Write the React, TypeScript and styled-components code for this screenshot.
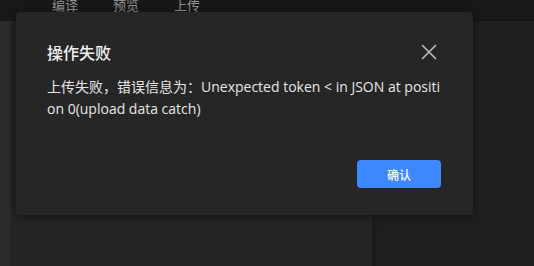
import React from "react";
import styled, { createGlobalStyle } from "styled-components";

const Global = createGlobalStyle`
  html, body { margin: 0; padding: 0; background: #1f1f1f; }
  body { font-family: "Open Sans", "Noto Sans CJK SC", sans-serif; }
  * { box-sizing: border-box; }
`;

const Page = styled.div`
  position: relative;
  width: 534px;
  height: 266px;
  overflow: hidden;
  display: flex;
  flex-direction: column;
  background: #1f1f1f;
`;

const TopBar = styled.div`
  height: 21px;
  background: #181818;
  display: flex;
  align-items: flex-start;
  padding-left: 52px;
  gap: 35px;
  border-bottom: 1px solid #151515;
`;

const Tab = styled.span`
  font-family: "Noto Sans CJK SC", sans-serif;
  font-size: 13px;
  line-height: 14px;
  margin-top: -2px;
  color: #8f8f8f;
`;

const Main = styled.div`
  flex: 1;
  display: flex;
`;

const SideStrip = styled.div`
  width: 10px;
  background: #2b2b2b;
`;

const Editor = styled.div`
  width: 367px;
  background: #252525;
  border-right: 5px solid #1c1c1c;
`;

const Preview = styled.div`
  flex: 1;
  background: #1f1f1f;
`;

const Modal = styled.div`
  position: absolute;
  left: 16px;
  top: 12px;
  width: 457px;
  height: 203px;
  background: #262626;
  border-radius: 4px;
  box-shadow: 0 2px 8px rgba(0, 0, 0, 0.45);
  padding: 28px 32px 27px 31px;
  display: flex;
  flex-direction: column;
`;

const Header = styled.div`
  display: flex;
  align-items: center;
  justify-content: space-between;
  height: 24px;
`;

const Title = styled.h2`
  margin: 0;
  font-family: "Noto Sans CJK SC", sans-serif;
  font-size: 16px;
  font-weight: 500;
  line-height: 24px;
  color: #f0f0f0;
`;

const Close = styled.button`
  border: 0;
  background: none;
  padding: 0;
  margin-right: 4px;
  width: 16px;
  height: 16px;
  display: flex;
  cursor: pointer;
`;

const Body = styled.p`
  margin: 12px 0 0;
  width: 397px;
  font-family: "Open Sans", "Noto Sans CJK SC", sans-serif;
  font-size: 14px;
  font-weight: 400;
  line-height: 22px;
  color: #e6e6e6;
  word-break: break-all;
`;

const Footer = styled.div`
  margin-top: auto;
  display: flex;
  justify-content: flex-end;
`;

const Button = styled.button`
  width: 84px;
  height: 28px;
  border: 0;
  border-radius: 4px;
  background: #3d87ff;
  color: #fff;
  font-family: "Noto Sans CJK SC", sans-serif;
  font-size: 12px;
  font-weight: 500;
  cursor: pointer;
`;

export default function App() {
  return (
    <>
      <Global />
      <Page>
        <TopBar>
          <Tab>编译</Tab>
          <Tab>预览</Tab>
          <Tab>上传</Tab>
        </TopBar>
        <Main>
          <SideStrip />
          <Editor />
          <Preview />
        </Main>
        <Modal>
          <Header>
            <Title>操作失败</Title>
            <Close aria-label="close">
              <svg width="16" height="16" viewBox="0 0 16 16">
                <path d="M1.5 1.5 L14.5 14.5 M14.5 1.5 L1.5 14.5" stroke="#bdbdbd" strokeWidth="1.6" strokeLinecap="round" />
              </svg>
            </Close>
          </Header>
          <Body>上传失败，错误信息为：Unexpected token &lt; in JSON at position 0(upload data catch)</Body>
          <Footer>
            <Button>确认</Button>
          </Footer>
        </Modal>
      </Page>
    </>
  );
}
